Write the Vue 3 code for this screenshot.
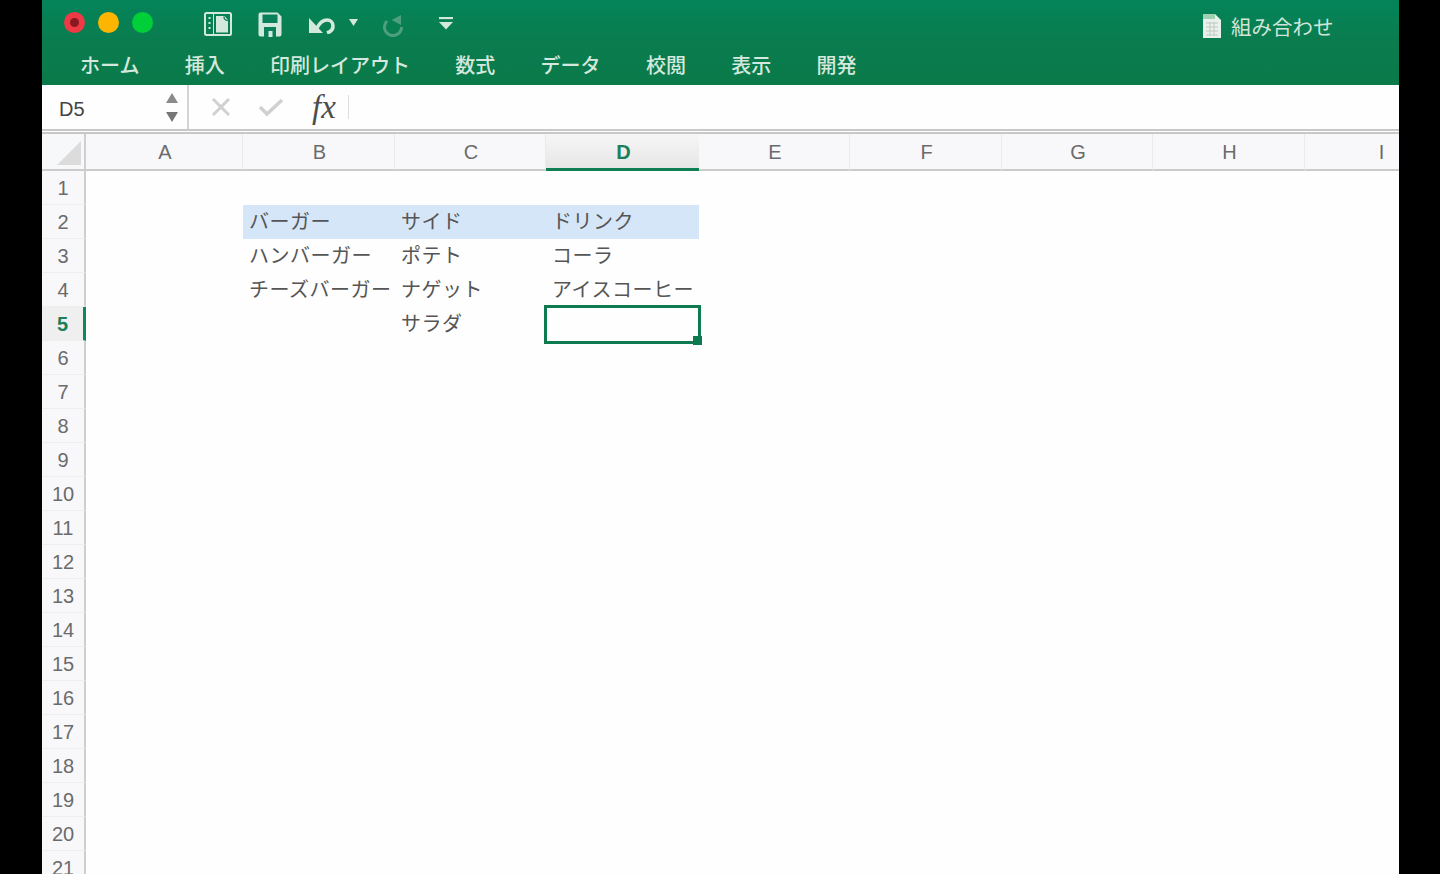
<script setup>
const tabs = ['ホーム', '挿入', '印刷レイアウト', '数式', 'データ', '校閲', '表示', '開発']
const cols = ['A', 'B', 'C', 'D', 'E', 'F', 'G', 'H', 'I']
const rows = Array.from({ length: 21 }, (_, i) => i + 1)
const data = {
  'B2': 'バーガー', 'C2': 'サイド', 'D2': 'ドリンク',
  'B3': 'ハンバーガー', 'C3': 'ポテト', 'D3': 'コーラ',
  'B4': 'チーズバーガー', 'C4': 'ナゲット', 'D4': 'アイスコーヒー',
  'C5': 'サラダ'
}
const isBand = (r, c) => r === 2 && ['B', 'C', 'D'].includes(c)
</script>

<template>
  <div class="app">
    <header class="ribbon">
      <div class="toolbar">
        <div class="lights">
          <span class="light red"><i></i></span>
          <span class="light yellow"></span>
          <span class="light green"></span>
        </div>
        <svg class="qa i-layout" width="28" height="24" viewBox="0 0 28 24">
          <rect x="1" y="1" width="26" height="22" rx="1.500" fill="none" stroke="#d5e8de" stroke-width="2"/>
          <path d="M5.500 5v2M5.500 10v2M5.500 15v2" stroke="#d5e8de" stroke-width="2"/>
          <path d="M9.500 1v22" stroke="#d5e8de" stroke-width="1"/>
          <path d="M12 4h8.500l3.500 4v12.500H12z" fill="#d5e8de"/>
          <path d="M20 4.500c0 3 .8 3.800 3.800 4" fill="none" stroke="#0b7f58" stroke-width="1.400"/>
        </svg>
        <svg class="qa i-save" width="24" height="25" viewBox="0 0 24 25">
          <path d="M2.500 0.500h17l4 4v18a2 2 0 0 1-2 2h-19a2 2 0 0 1-2-2v-20a2 2 0 0 1 2-2z" fill="#d5e8de"/>
          <rect x="4.500" y="2.500" width="15" height="8.500" fill="#08805a"/>
          <rect x="6" y="15" width="12" height="10" fill="#08805a"/>
          <rect x="10.500" y="19" width="4" height="6" fill="#d5e8de"/>
        </svg>
        <svg class="qa i-undo" width="28" height="18" viewBox="0 0 28 18">
          <path d="M1 2v15h14z" fill="#d5e8de"/>
          <path d="M9 12C12 6 15 4 19 4 23 4 25 7 25 10 25 14 22 16 19 17" fill="none" stroke="#d5e8de" stroke-width="3.600"/>
        </svg>
        <svg class="qa i-caret" width="9" height="7" viewBox="0 0 9 7"><path d="M0 0h9L4.500 7z" fill="#d5e8de"/></svg>
        <svg class="qa i-redo" width="23" height="25" viewBox="0 0 23 25">
          <path d="M6 9A8.500 8.500 0 1 0 20.500 15" fill="none" stroke="#4d9f7e" stroke-width="3"/>
          <path d="M20 3v10L10.700 8z" fill="#4d9f7e"/>
        </svg>
        <svg class="qa i-more" width="14" height="13" viewBox="0 0 14 13">
          <path d="M0 1h14" stroke="#d5e8de" stroke-width="2.200"/><path d="M0 5h14L7 12.500z" fill="#d5e8de"/>
        </svg>
        <div class="doc">
          <svg width="18" height="24" viewBox="0 0 18 24">
            <path d="M0 0h12l6 6v18H0z" fill="#e9f1ec"/>
            <path d="M0 0h12v5H0z" fill="#9fd0b2"/>
            <path d="M3 9h12M3 13h12M3 17h12M3 21h12M7 8v14M11 8v14" stroke="#bfc9c3" stroke-width="1"/>
          </svg>
          <span>組み合わせ</span>
        </div>
      </div>
      <nav class="tabs">
        <span v-for="t in tabs" :key="t">{{ t }}</span>
      </nav>
    </header>

    <section class="formula">
      <div class="name">
        <span class="ref">D5</span>
        <svg width="12" height="29" viewBox="0 0 12 29">
          <path d="M6 0l6 10H0z" fill="#8a8a8a"/><path d="M6 29l6-10H0z" fill="#777"/>
        </svg>
      </div>
      <div class="actions">
        <svg width="20" height="20" viewBox="0 0 20 20"><path d="M2 2l16 16M18 2L2 18" stroke="#d0d0d0" stroke-width="3"/></svg>
        <svg width="26" height="20" viewBox="0 0 26 20"><path d="M2 10l7 7L24 3" fill="none" stroke="#d0d0d0" stroke-width="3.500"/></svg>
        <span class="fx">fx</span>
        <i class="tick"></i>
      </div>
    </section>

    <section class="sheet">
      <div class="corner"><svg width="24" height="24" viewBox="0 0 24 24"><path d="M24 0v24H0z" fill="#dcdcdc"/></svg></div>
      <div v-for="c in cols" :key="c" class="col-head" :class="{ active: c === 'D' }">{{ c }}</div>
      <template v-for="r in rows" :key="r">
        <div class="row-head" :class="{ active: r === 5 }">{{ r }}</div>
        <div v-for="c in cols" :key="c" class="cell" :class="{ band: isBand(r, c), shift: c === 'D' }">
          {{ data[c + r] }}
          <div v-if="c === 'D' && r === 5" class="selection"><b></b></div>
        </div>
      </template>
    </section>
  </div>
</template>

<style>
html, body { background: #000; margin: 0; overflow: hidden; }
</style>

<style scoped>
.app {
  width: 1357px;
  height: 874px;
  margin-left: 42px;
  background: #fefefe;
  overflow: hidden;
  font-family: "Noto Sans CJK JP", "Liberation Sans", sans-serif;
}
.ribbon {
  height: 85px;
  background: linear-gradient(#04845a, #0a7c4e 50%, #0a7a4a);
  display: flex;
  flex-direction: column;
}
.toolbar { height: 46px; position: relative; }
.lights { display: flex; gap: 13px; padding: 12px 0 0 22px; }
.light {
  width: 21px; height: 21px; border-radius: 50%;
  display: flex; align-items: center; justify-content: center;
}
.red { background: #ef3a45; }
.red i { width: 9px; height: 9px; border-radius: 50%; background: #8a1822; }
.yellow { background: #fdb500; }
.green { background: #00cf3a; }
.qa { position: absolute; }
.i-layout { left: 162px; top: 12px; }
.i-save { left: 216px; top: 12px; }
.i-undo { left: 266px; top: 16px; }
.i-caret { left: 307px; top: 19px; }
.i-redo { left: 339px; top: 12px; }
.i-more { left: 397px; top: 17px; }
.doc {
  position: absolute; left: 1161px; top: 12px;
  display: flex; align-items: center; gap: 10px;
  color: #cfe5d9; font-size: 20.5px; line-height: 28px;
}
.tabs {
  display: flex; gap: 45.3px; padding: 0 0 0 38px;
  height: 39px; align-items: flex-start;
  color: #d5e8dd; font-size: 20px; font-weight: 500; line-height: 38px;
}
.formula {
  height: 44px;
  display: flex;
  border-bottom: 5px double #c8c8c8;
  background: #fefefe;
}
.name {
  width: 147px; box-sizing: border-box;
  display: flex; align-items: center; justify-content: space-between;
  padding: 0 9px 0 17px;
  border-right: 2px solid #d4d4d4;
  font-family: "Liberation Sans", sans-serif; font-size: 20px; color: #444;
}
.ref { padding-top: 5px; }
.name svg { margin-top: 1px; }
.actions { display: flex; align-items: center; padding-left: 22px; position: relative; flex: 1; }
.actions svg:nth-child(2) { margin-left: 27px; }
.fx {
  font-family: "Liberation Serif", serif; font-style: italic;
  font-size: 33px; color: #4d4d4d; margin-left: 28px; line-height: 30px;
}
.tick { width: 1px; height: 24px; background: #dedede; margin-left: 12px; }
.sheet {
  display: grid;
  grid-template-columns: 44px 157px 152px 151px 153px 151px 152px 151px 152px 152px;
  grid-template-rows: 37px repeat(21, 34px);
}
.corner {
  background: #f7f8f9; border-right: 2px solid #cfcfcf; border-bottom: 2px solid #cbcbcb;
  box-sizing: border-box; padding: 7px 0 0 15px;
}
.corner svg { display: block; }
.col-head {
  box-sizing: border-box;
  background: #f8f8fa;
  border-bottom: 2px solid #cbcbcb;
  border-right: 1px solid #ebebeb;
  padding-left: 2px;
  font-family: "Liberation Sans", sans-serif; font-size: 20px; color: #6b6b6b;
  text-align: center; line-height: 37px;
}
.col-head.active {
  background: linear-gradient(#f6f6f6, #e6e6e6);
  border-bottom: 3px solid #0d7f52;
  color: #1b7f5a; font-weight: 700;
  border-right: none;
}
.row-head {
  box-sizing: border-box;
  background: #f8f8fa;
  border-right: 2px solid #cfcfcf;
  border-bottom: 1px solid #eeeeee;
  font-family: "Liberation Sans", sans-serif; font-size: 20px; color: #6b6b6b;
  text-align: center; line-height: 34px;
}
.row-head.active {
  background: #efefef; border-right: 3px solid #0d8a58;
  color: #1b7f5a; font-weight: 700;
}
.cell {
  position: relative;
  padding-left: 6px;
  font-size: 20px; letter-spacing: 0.5px; color: #555; line-height: 32px;
  white-space: nowrap;
}
.cell.band { background: #d6e6f9; }
.selection {
  position: absolute; left: -2px; top: -2px; width: 157px; height: 39px;
  box-sizing: border-box; border: 3px solid #0d7a4f;
  letter-spacing: 0;
}
.selection b {
  position: absolute; right: -4px; bottom: -4px;
  width: 9px; height: 9px; background: #0d7a4f;
}
</style>
